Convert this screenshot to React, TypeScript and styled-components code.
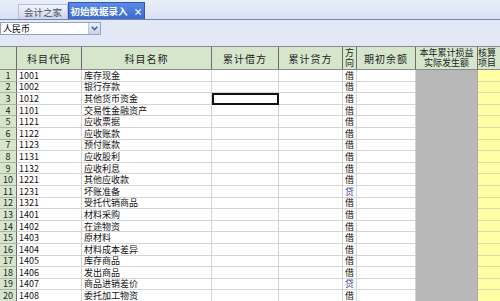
import { Fragment } from "react";
import styled, { createGlobalStyle, css } from "styled-components";

const GlobalStyle = createGlobalStyle`
  html, body {
    margin: 0;
    padding: 0;
    overflow: hidden;
    background: #e2e8f6;
  }
  * {
    box-sizing: border-box;
  }
`;

const FONT = `"Noto Sans CJK SC", "Noto Sans", sans-serif`;

const Page = styled.div`
  width: 500px;
  height: 301px;
  overflow: hidden;
  font-family: ${FONT};
  background: #e2e8f6;
`;

const TabBar = styled.div`
  height: 20px;
  display: flex;
  align-items: flex-end;
  padding-left: 18px;
  background: linear-gradient(#e9eef9, #d9e1f3);
  border-bottom: 1px solid #7385aa;
`;

const Tab = styled.div<{ active?: boolean }>`
  display: flex;
  align-items: center;
  justify-content: center;
  gap: 6px;
  font-size: 9.5px;
  white-space: nowrap;
  ${(p) =>
    p.active
      ? css`
          width: 77px;
          height: 17px;
          color: #ffffff;
          font-weight: bold;
          background: linear-gradient(#5a8be6, #3a6ad2);
          border: 1px solid #2f58b0;
          border-bottom: none;
        `
      : css`
          width: 50px;
          height: 15px;
          color: #4d5566;
          background: linear-gradient(#f1f4fa, #cbd5e9);
          border: 1px solid #b4c0d8;
          border-bottom: none;
        `}
`;

const Close = styled.span`
  font-size: 9px;
  font-weight: bold;
`;

const Toolbar = styled.div`
  height: 26px;
  padding-top: 2px;
`;

const CurrencySelect = styled.div`
  width: 101px;
  height: 13px;
  display: flex;
  align-items: center;
  background: #ffffff;
  border: 1px solid #8fa5c8;
  font-size: 9px;
  color: #000;
  padding-left: 2px;
`;

const SelectText = styled.span`
  flex: 1;
`;

const SelectArrow = styled.div`
  width: 12px;
  height: 11px;
  display: flex;
  align-items: center;
  justify-content: center;
  background: linear-gradient(#e9eef8, #c7d3ea);
  border-left: 1px solid #b8c6df;
`;

const Sheet = styled.div`
  display: grid;
  grid-template-columns: 17px 65px 130px 67px 64px 14px 59px 62px 40px;
  grid-template-rows: 23px;
  grid-auto-rows: 11.6px;
  background: #ffffff;
  border-top: 1px solid #8a8a8a;
  width: 518px;
`;

const HeadCell = styled.div<{ tight?: boolean; left?: boolean }>`
  display: flex;
  flex-direction: column;
  align-items: ${(p) => (p.left ? "flex-start" : "center")};
  justify-content: center;
  text-align: center;
  background: #d5e6cd;
  border-right: 1px solid #6f6f6f;
  border-bottom: 1px solid #8a8a8a;
  font-size: ${(p) => (p.tight ? "9px" : "10px")};
  line-height: 11px;
  color: #222;
  letter-spacing: ${(p) => (p.tight ? "0" : "1px")};
  white-space: nowrap;
`;

const HeadLine = styled.span`
  display: block;
  height: 10.5px;
  line-height: 10.5px;
`;

const RowNum = styled.div`
  display: flex;
  align-items: center;
  justify-content: center;
  background: #d5e6cd;
  border-right: 1px solid #6f6f6f;
  border-bottom: 1px solid #aab8a4;
  font-size: 9px;
  color: #222;
`;

type Kind = "text" | "dir" | "gray" | "yellow" | "blank";

const Cell = styled.div<{ kind: Kind; credit?: boolean; selected?: boolean }>`
  display: flex;
  align-items: center;
  font-size: 9px;
  line-height: 1;
  color: #111;
  white-space: nowrap;
  overflow: hidden;
  padding-left: 2px;
  border-right: 1px solid #d4d4d4;
  border-bottom: 1px solid #d4d4d4;
  ${(p) =>
    p.kind === "dir" &&
    css`
      justify-content: center;
      padding-left: 0;
      color: ${p.credit ? "#3c3c96" : "#111"};
    `}
  ${(p) =>
    p.kind === "gray" &&
    css`
      background: #b8b8b8;
      border-bottom-color: #b8b8b8;
      border-right-color: #a8a8a8;
    `}
  ${(p) =>
    p.kind === "yellow" &&
    css`
      background: #ffffa6;
      border-bottom-color: #d9d9a0;
    `}
  ${(p) =>
    p.selected &&
    css`
      border: 2px solid #111;
    `}
`;

const rows: [string, string, string][] = [
  ["1001", "库存现金", "借"],
  ["1002", "银行存款", "借"],
  ["1012", "其他货币资金", "借"],
  ["1101", "交易性金融资产", "借"],
  ["1121", "应收票据", "借"],
  ["1122", "应收账款", "借"],
  ["1123", "预付账款", "借"],
  ["1131", "应收股利", "借"],
  ["1132", "应收利息", "借"],
  ["1221", "其他应收款", "借"],
  ["1231", "坏账准备", "贷"],
  ["1321", "受托代销商品", "借"],
  ["1401", "材料采购", "借"],
  ["1402", "在途物资", "借"],
  ["1403", "原材料", "借"],
  ["1404", "材料成本差异", "借"],
  ["1405", "库存商品", "借"],
  ["1406", "发出商品", "借"],
  ["1407", "商品进销差价", "贷"],
  ["1408", "委托加工物资", "借"],
];

function App() {
  return (
    <Page>
      <GlobalStyle />
      <TabBar>
        <Tab>会计之家</Tab>
        <Tab active>
          初始数据录入
          <Close>×</Close>
        </Tab>
      </TabBar>
      <Toolbar>
        <CurrencySelect>
          <SelectText>人民币</SelectText>
          <SelectArrow>
            <svg width="7" height="5" viewBox="0 0 7 5">
              <path d="M0.8 0.8 L3.5 3.8 L6.2 0.8" fill="none" stroke="#4a5a7a" strokeWidth="1.4" />
            </svg>
          </SelectArrow>
        </CurrencySelect>
      </Toolbar>
      <Sheet>
        <HeadCell />
        <HeadCell>科目代码</HeadCell>
        <HeadCell>科目名称</HeadCell>
        <HeadCell>累计借方</HeadCell>
        <HeadCell>累计贷方</HeadCell>
        <HeadCell tight>
          <HeadLine>方</HeadLine>
          <HeadLine>向</HeadLine>
        </HeadCell>
        <HeadCell>期初余额</HeadCell>
        <HeadCell tight>
          <HeadLine>本年累计损益</HeadLine>
          <HeadLine>实际发生额</HeadLine>
        </HeadCell>
        <HeadCell tight left>
          <HeadLine>核算</HeadLine>
          <HeadLine>项目</HeadLine>
        </HeadCell>
        {rows.map(([code, name, dir], i) => (
          <Fragment key={code}>
            <RowNum>{i + 1}</RowNum>
            <Cell kind="text">{code}</Cell>
            <Cell kind="text">{name}</Cell>
            <Cell kind="blank" selected={i === 2} />
            <Cell kind="blank" />
            <Cell kind="dir" credit={dir === "贷"}>
              {dir}
            </Cell>
            <Cell kind="blank" />
            <Cell kind="gray" />
            <Cell kind="yellow" />
          </Fragment>
        ))}
      </Sheet>
    </Page>
  );
}

export default App;
